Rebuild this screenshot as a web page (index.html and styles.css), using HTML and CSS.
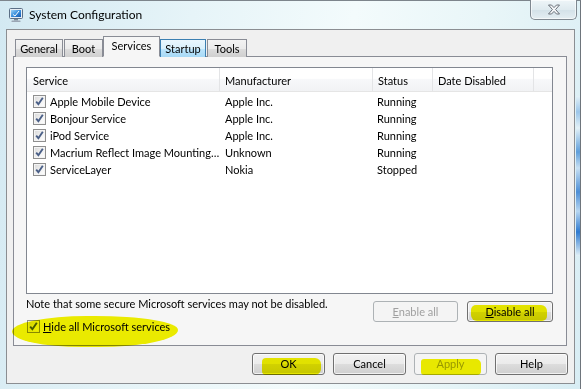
FILE: index.html
```html
<!DOCTYPE html>
<html>
<head>
<meta charset="utf-8">
<link rel="stylesheet" href="styles.css">
</head>
<body>
<div class="window">
  <div class="titlebar">
    <svg class="appicon" width="16" height="16" viewBox="0 0 16 16">
      <defs>
        <linearGradient id="scr" x1="0" y1="0" x2="1" y2="1">
          <stop offset="0" stop-color="#9fd3f7"/>
          <stop offset="0.5" stop-color="#3a8fdc"/>
          <stop offset="1" stop-color="#1558b0"/>
        </linearGradient>
      </defs>
      <rect x="1.5" y="1.5" width="13" height="10" rx="1" fill="#e8eef4" stroke="#5b6f86"/>
      <rect x="3" y="3" width="10" height="7" fill="url(#scr)"/>
      <path d="M5 7.5 L7 9 L11 4" fill="none" stroke="#ffffff" stroke-width="1"/>
      <rect x="6" y="12" width="4" height="1.5" fill="#7a8797"/>
      <rect x="3.5" y="13.5" width="9" height="1.5" rx="0.5" fill="#9aa6b4"/>
    </svg>
    <span class="title">System Configuration</span>
    <div class="close">
      <svg width="14" height="11" viewBox="0 0 14 11">
        <path d="M1.5 1 L4.5 1 L7 3.6 L9.5 1 L12.5 1 L8.6 5.5 L12.5 10 L9.5 10 L7 7.4 L4.5 10 L1.5 10 L5.4 5.5 Z" fill="#f4f6f8" stroke="#5f656e" stroke-width="0.9" stroke-linejoin="round"/>
      </svg>
    </div>
  </div>
  <div class="client">
    <div class="tabs">
      <div class="tab t-general">General</div>
      <div class="tab t-boot">Boot</div>
      <div class="tab t-services active">Services</div>
      <div class="tab t-startup hover">Startup</div>
      <div class="tab t-tools">Tools</div>
    </div>
    <div class="panel">
      <div class="listview">
        <div class="lv-head">
          <div class="hcol c1">Service</div>
          <div class="hcol c2">Manufacturer</div>
          <div class="hcol c3">Status</div>
          <div class="hcol c4">Date Disabled</div>
          <div class="hcol c5"></div>
        </div>
        <div class="lv-body">
          <div class="row">
            <div class="cell c1"><span class="chk"></span><span class="txt">Apple Mobile Device</span></div>
            <div class="cell c2">Apple Inc.</div>
            <div class="cell c3">Running</div>
          </div>
          <div class="row">
            <div class="cell c1"><span class="chk"></span><span class="txt">Bonjour Service</span></div>
            <div class="cell c2">Apple Inc.</div>
            <div class="cell c3">Running</div>
          </div>
          <div class="row">
            <div class="cell c1"><span class="chk"></span><span class="txt">iPod Service</span></div>
            <div class="cell c2">Apple Inc.</div>
            <div class="cell c3">Running</div>
          </div>
          <div class="row">
            <div class="cell c1"><span class="chk"></span><span class="txt">Macrium Reflect Image Mounting…</span></div>
            <div class="cell c2">Unknown</div>
            <div class="cell c3">Running</div>
          </div>
          <div class="row">
            <div class="cell c1"><span class="chk"></span><span class="txt">ServiceLayer</span></div>
            <div class="cell c2">Nokia</div>
            <div class="cell c3">Stopped</div>
          </div>
        </div>
      </div>
      <div class="lower">
        <div class="lower-left">
          <div class="note">Note that some secure Microsoft services may not be disabled.</div>
          <div class="hide"><span class="chk"></span><span class="txt"><u>H</u>ide all Microsoft services</span></div>
        </div>
        <div class="lower-btns">
          <div class="btn disabled w85"><u>E</u>nable all</div>
          <div class="btn w86"><u>D</u>isable all</div>
        </div>
      </div>
    </div>
    <div class="footer">
      <div class="btn fb">OK</div>
      <div class="btn fb">Cancel</div>
      <div class="btn fb disabled">Apply</div>
      <div class="btn fb">Help</div>
    </div>
  </div>
  <div class="glass"></div>
  <div class="mark m-hide"></div>
  <div class="mark m-ok"></div>
  <div class="mark m-disable"></div>
  <div class="mark m-apply"></div>
</div>
</body>
</html>
```
FILE: styles.css
```css
* { box-sizing: border-box; }
html, body { margin: 0; padding: 0; }
body {
  width: 581px;
  height: 389px;
  overflow: hidden;
  font-family: "Segoe UI", Lato, "Open Sans", sans-serif;
  font-size: 11px;
  color: #000;
}
.window {
  position: relative;
  width: 581px;
  height: 389px;
  display: flex;
  flex-direction: column;
  border-top: 1px solid #7d858c;
  border-right: 1px solid #6e757c;
  background: linear-gradient(100deg, #d3e9f2 0%, #e6f4f8 30%, #f3fbfc 55%, #e9f6f8 75%, #d8edf4 100%);
}
.glass {
  position: absolute;
  right: 0;
  top: 95px;
  width: 4px;
  height: 160px;
  background: linear-gradient(#e3f1f7, #9cc6ea 10%, #e3f1f7 20%, #5f9fdb 35%, #c7e0f3 45%, #4d8fd6 60%, #b8d7f1 72%, #2f7bd0 85%, #e3f1f7);
}
.titlebar {
  height: 28px;
  display: flex;
  align-items: flex-start;
  flex-shrink: 0;
}
.appicon { margin: 6px 0 0 8px; }
.title {
  margin: 6px 0 0 5px;
  font-size: 12px;
  line-height: 16px;
  color: #000;
}
.close {
  margin-left: auto;
  margin-right: 3px;
  margin-top: -1px;
  width: 47px;
  height: 20px;
  border: 1px solid #7f8890;
  border-top: none;
  border-radius: 0 0 5px 5px;
  background: linear-gradient(#eef5f8, #dfeaef 50%, #d3e1e8 51%, #e4eef2);
  box-shadow: inset 0 0 0 1px rgba(255,255,255,0.6);
  display: flex;
  align-items: center;
  justify-content: center;
}
.client {
  margin: 0 5px 0 6px;
  height: 355px;
  border: 1px solid #8b8e92;
  background: #f0f0f0;
  padding: 7px 7px 7px 6px;
  display: flex;
  flex-direction: column;
}
.tabs {
  height: 20px;
  display: flex;
  align-items: flex-end;
  padding-left: 2px;
  margin-bottom: -1px;
  position: relative;
  z-index: 2;
}
.tab {
  height: 18px;
  border: 1px solid #898c95;
  border-bottom: none;
  background: linear-gradient(#f3f3f3, #ebebeb 50%, #dddddd 51%, #cfcfcf);
  text-align: center;
  line-height: 16px;
  padding-top: 1px;
  margin-right: 1px;
}
.tab.active {
  height: 21px;
  background: #f6f6f6;
  border-bottom: 1px solid #f6f6f6;
  margin-left: -1px;
  margin-right: 0;
  line-height: 16px;
  padding-top: 1px;
  position: relative;
}
.tab.hover {
  background: linear-gradient(#eaf6fd, #d9f0fc 50%, #bee6fd 51%, #a7d9f5);
  border-color: #3c7fb1;
}
.t-general { width: 48px; }
.t-boot { width: 39px; }
.t-services { width: 57px; }
.t-startup { width: 46px; }
.t-tools { width: 40px; }
.panel {
  height: 290px;
  border: 1px solid #898c95;
  background: #f6f6f6;
  padding: 10px 13px 0 12px;
  display: flex;
  flex-direction: column;
}
.listview {
  height: 227px;
  border: 1px solid #828790;
  background: #fff;
  flex-shrink: 0;
}
.lv-head {
  height: 24px;
  display: flex;
  border-bottom: 1px solid #e5e5e5;
  background: linear-gradient(#ffffff 0%, #ffffff 45%, #f7f8fa 50%, #f1f2f4 100%);
}
.hcol {
  line-height: 25px;
  border-right: 1px solid #e3e4e6;
  padding-left: 5px;
  white-space: nowrap;
  overflow: hidden;
}
.c1 { width: 193px; padding-left: 6px; }
.c2 { width: 153px; }
.c3 { width: 60px; }
.c4 { width: 101px; }
.hcol.c5 { flex: 1; border-right: none; }
.lv-body { padding-top: 1px; }
.row {
  height: 17px;
  display: flex;
  align-items: center;
}
.cell {
  white-space: nowrap;
  overflow: hidden;
  padding-left: 5px;
  line-height: 17px;
}
.cell.c1 {
  display: flex;
  align-items: center;
  padding-left: 6px;
}
.cell.c2 { width: 153px; padding-left: 5px; }
.cell.c3 { width: 60px; padding-left: 4px; }
.chk {
  width: 13px;
  height: 13px;
  flex-shrink: 0;
  border: 1px solid #8f8f8f;
  background:
    url("data:image/svg+xml,%3Csvg xmlns='http://www.w3.org/2000/svg' width='11' height='11' viewBox='0 0 11 11'%3E%3Cpath d='M2.2 5.6 L4.4 8.2 L8.8 1.8' fill='none' stroke='%234a5f87' stroke-width='1.9'/%3E%3C/svg%3E") center / 11px 11px no-repeat,
    linear-gradient(135deg, #d8d8d8, #f3f3f3 60%, #ffffff);
  box-shadow: inset 0 0 0 1px #f4f4f4;
}
.cell .txt { margin-left: 4px; }
.lower {
  display: flex;
  justify-content: space-between;
}
.lower-left { display: flex; flex-direction: column; }
.note {
  margin-top: 2px;
  line-height: 15px;
  white-space: nowrap;
}
.hide {
  margin-top: 9px;
  margin-left: 1px;
  display: flex;
  align-items: center;
  line-height: 13px;
}
.hide .txt { margin-left: 3px; }
.lower-btns {
  display: flex;
  gap: 9px;
  margin-top: 7px;
}
.btn {
  height: 21px;
  border: 1px solid #707070;
  border-radius: 3px;
  background: linear-gradient(#f2f2f2, #ebebeb 50%, #dddddd 51%, #cfcfcf);
  box-shadow: inset 0 0 0 1px rgba(255,255,255,0.7);
  text-align: center;
  line-height: 19px;
}
.btn.disabled {
  border-color: #adb2b5;
  background: #f4f4f4;
  color: #a0a0a0;
  box-shadow: none;
}
.w85 { width: 85px; }
.w86 { width: 86px; }
.footer {
  margin-top: 7px;
  margin-right: -1px;
  display: flex;
  justify-content: flex-end;
  gap: 8px;
}
.fb { width: 73px; height: 22px; line-height: 20px; }
.mark {
  position: absolute;
  background: #f3f300;
  mix-blend-mode: multiply;
  filter: blur(0.6px);
}
.m-hide {
  left: 12px; top: 315px; width: 166px; height: 31px;
  border-radius: 45% 50% 48% 42% / 50% 45% 55% 50%;
}
.m-ok {
  left: 262px; top: 357px; width: 59px; height: 17px;
  border-radius: 4px 6px 6px 4px;
}
.m-disable {
  left: 471px; top: 304px; width: 76px; height: 16px;
  border-radius: 5px 6px 5px 6px;
}
.m-apply {
  left: 421px; top: 358px; width: 60px; height: 16px;
  border-radius: 3px 5px 4px 3px;
}
```
